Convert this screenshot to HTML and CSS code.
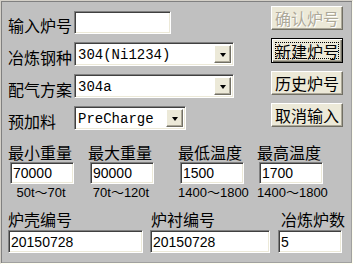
FILE: index.html
```html
<!DOCTYPE html>
<html lang="zh-CN">
  <head>
    <meta charset="UTF-8" />
    <title>炉号设置</title>
    <link rel="stylesheet" href="styles.css">
  </head>
  <body>
    <div class="frame">
      <div class="top">
        <div class="fields">
          <div class="row">
            <span class="lbl">输入炉号</span>
            <input class="field code" type="text" value="" />
          </div>
          <div class="row">
            <span class="lbl">冶炼钢种</span>
            <div class="combo wide"><span class="val">304(Ni1234)</span><span class="drop"></span></div>
          </div>
          <div class="row">
            <span class="lbl">配气方案</span>
            <div class="combo wide"><span class="val">304a</span><span class="drop"></span></div>
          </div>
          <div class="row">
            <span class="lbl">预加料</span>
            <div class="combo short"><span class="val">PreCharge</span><span class="drop"></span></div>
          </div>
        </div>

        <div class="actions">
          <button type="button" class="btn" disabled>确认炉号</button>
          <button type="button" class="btn default">新建炉号</button>
          <button type="button" class="btn">历史炉号</button>
          <button type="button" class="btn">取消输入</button>
        </div>
      </div>

      <div class="limits">
        <div class="limit">
          <span class="cap">最小重量</span>
          <input class="field num" type="text" value="70000" />
          <span class="range">50t～70t</span>
        </div>
        <div class="limit">
          <span class="cap">最大重量</span>
          <input class="field num" type="text" value="90000" />
          <span class="range">70t～120t</span>
        </div>
        <div class="limit">
          <span class="cap">最低温度</span>
          <input class="field num" type="text" value="1500" />
          <span class="range">1400～1800</span>
        </div>
        <div class="limit">
          <span class="cap">最高温度</span>
          <input class="field num" type="text" value="1700" />
          <span class="range">1400～1800</span>
        </div>
      </div>

      <div class="ids">
        <div class="id">
          <span class="cap">炉壳编号</span>
          <input class="field shell" type="text" value="20150728" />
        </div>
        <div class="id lining">
          <span class="cap">炉衬编号</span>
          <input class="field lining-no" type="text" value="20150728" />
        </div>
        <div class="id count">
          <span class="cap">冶炼炉数</span>
          <input class="field count-no" type="text" value="5" />
        </div>
      </div>
    </div>
  </body>
</html>
```

FILE: styles.css
```css
:root {
  --bg: #c0c0c0;
  --face: #ece9d8;
  --shadow: #aca899;
  --dark: #716f64;
}
* {
  box-sizing: border-box;
}
body {
  margin: 0;
  background: var(--bg);
}
.frame {
  width: 353px;
  height: 264px;
  padding: 0 9px 0 7px;
  background: var(--bg);
  border: 1px solid;
  border-color: #d4d0c8 #fffff0 #fffff0 #d4d0c8;
  box-shadow: inset 1px 1px 0 #808080, inset -1px -1px 0 #a0a0a0;
  font-family: "Noto Sans CJK SC", sans-serif;
  font-size: 16px;
  color: #000;
}

/* top part: fields on the left, buttons on the right */
.top {
  display: flex;
  justify-content: space-between;
}
.fields {
  display: flex;
  flex-direction: column;
  gap: 8px;
  padding-top: 9px;
}
.row {
  display: flex;
  align-items: center;
  height: 24px;
}
.lbl {
  width: 66px;
  align-self: flex-end;
  line-height: 18px;
  white-space: nowrap;
}
.actions {
  display: flex;
  flex-direction: column;
  gap: 8px;
  padding-top: 5px;
}

/* sunken text boxes */
.field {
  margin: 0;
  padding: 0 0 0 2px;
  height: 22px;
  background: #fff;
  border: 1px solid;
  border-color: #808080 #fff #fff #808080;
  box-shadow: inset 1px 1px 0 #404040, inset -1px -1px 0 var(--face);
  font-family: "Liberation Sans", sans-serif;
  font-size: 14px;
  color: #000;
  outline: none;
}
.field.code {
  width: 97px;
  height: 23px;
  align-self: flex-start;
  margin-top: 1px;
}

/* combo boxes */
.combo {
  display: flex;
  height: 24px;
  padding: 2px;
  background: #fff;
  border: 1px solid;
  border-color: #808080 #fff #fff #808080;
  box-shadow: inset 1px 1px 0 #404040, inset -1px -1px 0 var(--face);
}
.combo.wide {
  width: 160px;
}
.combo.short {
  width: 112px;
}
.val {
  flex: 1;
  padding-left: 1px;
  font-family: "Liberation Mono", monospace;
  font-size: 14px;
  line-height: 20px;
  white-space: nowrap;
  overflow: hidden;
}
.drop {
  width: 17px;
  display: flex;
  align-items: center;
  justify-content: center;
  background: var(--face);
  border: 1px solid;
  border-color: #fff var(--dark) var(--dark) #fff;
  box-shadow: inset -1px -1px 0 var(--shadow);
}
.drop::after {
  content: "";
  border-left: 3.5px solid transparent;
  border-right: 3.5px solid transparent;
  border-top: 4px solid #000;
  margin-top: 1px;
}

/* buttons */
.btn {
  position: relative;
  width: 72px;
  height: 24px;
  padding: 0;
  background: var(--face);
  border: 1px solid;
  border-color: #fff var(--dark) var(--dark) #fff;
  box-shadow: inset -1px -1px 0 var(--shadow);
  font-family: "Noto Sans CJK SC", sans-serif;
  font-size: 16px;
  line-height: 20px;
  color: #000;
}
.btn:disabled {
  color: var(--shadow);
  text-shadow: 1px 1px 0 #fff;
}
.btn.default {
  height: 25px;
  border-color: #000;
  box-shadow: inset 1px 1px 0 #fff, inset -1px -1px 0 var(--dark), inset -2px -2px 0 var(--shadow);
}
.btn.default::after {
  content: "";
  position: absolute;
  inset: 3px;
  border: 1px dotted #000;
}

/* weight / temperature limits */
.limits {
  display: grid;
  grid-template-columns: 80px 90px 79px 1fr;
  margin-top: 13px;
}
.limit {
  display: flex;
  flex-direction: column;
  align-items: flex-start;
}
.cap {
  line-height: 18px;
  white-space: nowrap;
}
.field.num {
  width: 64px;
  margin: 1px 0 0 2px;
}
.range {
  width: 66px;
  margin: 2px 0 0 0;
  text-align: center;
  font-family: "Liberation Sans", "Noto Sans CJK SC", sans-serif;
  font-size: 13px;
  line-height: 14px;
  white-space: nowrap;
}

/* furnace ids */
.ids {
  display: grid;
  grid-template-columns: 142px 128px 1fr;
  margin-top: 10px;
}
.id {
  display: flex;
  flex-direction: column;
  align-items: flex-start;
}
.id.lining .cap {
  margin-left: 1px;
}
.id.count .cap {
  margin-left: 3px;
}
.field.shell,
.field.lining-no,
.field.count-no {
  height: 23px;
  margin-top: 2px;
}
.field.shell {
  width: 135px;
}
.field.lining-no {
  width: 120px;
}
.field.count-no {
  width: 64px;
}
```
